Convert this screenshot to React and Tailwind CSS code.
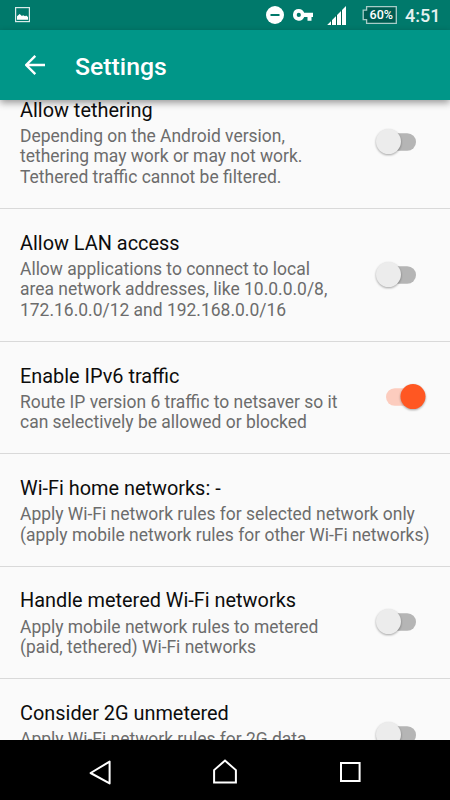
const settings = [
  {
    title: 'Allow tethering',
    lines: ['Depending on the Android version,', 'tethering may work or may not work.', 'Tethered traffic cannot be filtered.'],
    on: false,
  },
  {
    title: 'Allow LAN access',
    lines: ['Allow applications to connect to local', 'area network addresses, like 10.0.0.0/8,', '172.16.0.0/12 and 192.168.0.0/16'],
    on: false,
  },
  {
    title: 'Enable IPv6 traffic',
    lines: ['Route IP version 6 traffic to netsaver so it', 'can selectively be allowed or blocked'],
    on: true,
  },
  {
    title: 'Wi-Fi home networks: -',
    lines: ['Apply Wi-Fi network rules for selected network only', '(apply mobile network rules for other Wi-Fi networks)'],
  },
  {
    title: 'Handle metered Wi-Fi networks',
    lines: ['Apply mobile network rules to metered', '(paid, tethered) Wi-Fi networks'],
    on: false,
  },
  {
    title: 'Consider 2G unmetered',
    lines: ['Apply Wi-Fi network rules for 2G data'],
    on: false,
  },
];

function Switch({ on }) {
  return (
    <svg className="h-8 w-14 shrink-0" viewBox="0 0 56 32" role="switch" aria-checked={on}>
      <rect x="13" y="7.3" width="30" height="17.5" rx="8.75" fill={on ? '#fcccbe' : '#b5b5b5'} />
      <circle
        className="[filter:drop-shadow(0_1px_1px_rgba(0,0,0,0.35))]"
        cx={on ? 40 : 15.5}
        cy="15.6"
        r="12.5"
        fill={on ? '#ff5722' : '#ececec'}
      />
    </svg>
  );
}

function Setting({ title, lines, on }) {
  return (
    <div className="flex min-h-[112.4px] items-center border-b border-[#d9d9d9] pr-[21px] pl-5">
      <div className="min-w-0 flex-1 self-start pt-[22.8px] pb-[20.4px] whitespace-nowrap">
        <div className="text-[19.9px] leading-6 text-[#0c0c0c]">{title}</div>
        <div className="mt-[3.2px] text-[17.47px] leading-[20.5px] text-[#6c6c6c]">
          {lines.map((line) => (
            <div key={line}>{line}</div>
          ))}
        </div>
      </div>
      {on !== undefined && <Switch on={on} />}
    </div>
  );
}

function StatusBar() {
  return (
    <div className="flex h-[30px] items-center bg-[#00796b] pl-[15px] text-white">
      <svg className="h-4 w-4" viewBox="0 0 16 16">
        <rect x=".6" y=".6" width="13.8" height="14" fill="none" stroke="#d9ebe9" strokeWidth="1.2" />
        <path d="M2 12.7V9.2l2.7-2.3 2.2 2.2 1.2-.9 2 1 1-.7 1.9 1.6v2.6z" fill="white" />
      </svg>
      <svg className="ml-[235px] h-[18px] w-[18px]" viewBox="0 0 18 18">
        <circle cx="9" cy="9" r="9" fill="white" />
        <rect x="4.5" y="8" width="9" height="2" fill="#00796b" />
      </svg>
      <svg className="ml-[9px] h-3 w-5" viewBox="0 0 20 12">
        <path
          fillRule="evenodd"
          d="M5.8 0a5.8 5.8 0 0 1 5.4 3.8H20V8h-1.5v3.8h-4V8h-3.3A5.8 5.8 0 1 1 5.8 0zM5.8 3.8a2.1 2.1 0 1 0 0 4.2 2.1 2.1 0 0 0 0-4.2z"
          fill="white"
        />
      </svg>
      <svg className="mt-0.5 ml-[14px] h-5 w-5" viewBox="0 0 20 20">
        <path d="M.2 19 19 0v19z" fill="white" />
        <path d="M4.5 14v5M9.5 9v10M14.5 4v15" stroke="#00604f" strokeWidth="1" />
      </svg>
      <svg className="ml-[15px] h-[18px] w-9" viewBox="0 0 36 18">
        <path d="M4.6.7h29.7v16.6H4.6v-3.6H1.2V4.2h3.4z" fill="#005c51" stroke="#a7cdc8" strokeWidth="1.3" />
        <text x="19.3" y="13.3" textAnchor="middle" textLength="23.5" fill="white" className="font-[Roboto,sans-serif] text-[12.5px] font-medium">60%</text>
      </svg>
      <div className="mt-0.5 ml-[7px] text-[18px] leading-5 font-medium text-[#e6f1f0]">4:51</div>
    </div>
  );
}

export default function App() {
  return (
    <div className="flex h-[800px] w-[450px] flex-col overflow-hidden bg-[#fafafa] font-[Roboto,sans-serif]">
      <StatusBar />
      <header className="relative z-10 flex h-[70px] shrink-0 items-center bg-[#009688] pl-[25px] shadow-[0_3px_7px_rgba(0,0,0,0.38)]">
        <svg className="h-5 w-5" viewBox="0 0 20 20">
          <path d="M20 10H1.8M10 .9.9 10l9.1 9.1" transform="translate(.3 0)" fill="none" stroke="white" strokeWidth="2.4" />
        </svg>
        <h1 className="mt-[3px] ml-[30px] text-[24.8px] leading-8 font-medium text-white">Settings</h1>
      </header>
      <main className="min-h-0 flex-1 overflow-hidden">
        <div className="-mt-6">
          {settings.map((setting) => (
            <Setting key={setting.title} {...setting} />
          ))}
        </div>
      </main>
      <nav className="flex h-[60px] shrink-0 items-center bg-black pt-[3px] pl-[88px]">
        <svg className="h-7 w-6" viewBox="0 0 24 28">
          <path d="M21.6 4.1v21.8L2.6 15.5z" transform="translate(0 -.5)" fill="none" stroke="white" strokeWidth="2" strokeLinejoin="round" />
        </svg>
        <svg className="ml-[99px] h-7 w-7" viewBox="0 0 28 28">
          <path d="M3.1 24.5V12.1L14 2.6l10.9 9.5v12.4z" fill="none" stroke="white" strokeWidth="2" />
        </svg>
        <svg className="ml-[98px] h-7 w-7" viewBox="0 0 28 28">
          <rect x="4" y="5" width="18.6" height="18" fill="none" stroke="white" strokeWidth="2" />
        </svg>
      </nav>
    </div>
  );
}
